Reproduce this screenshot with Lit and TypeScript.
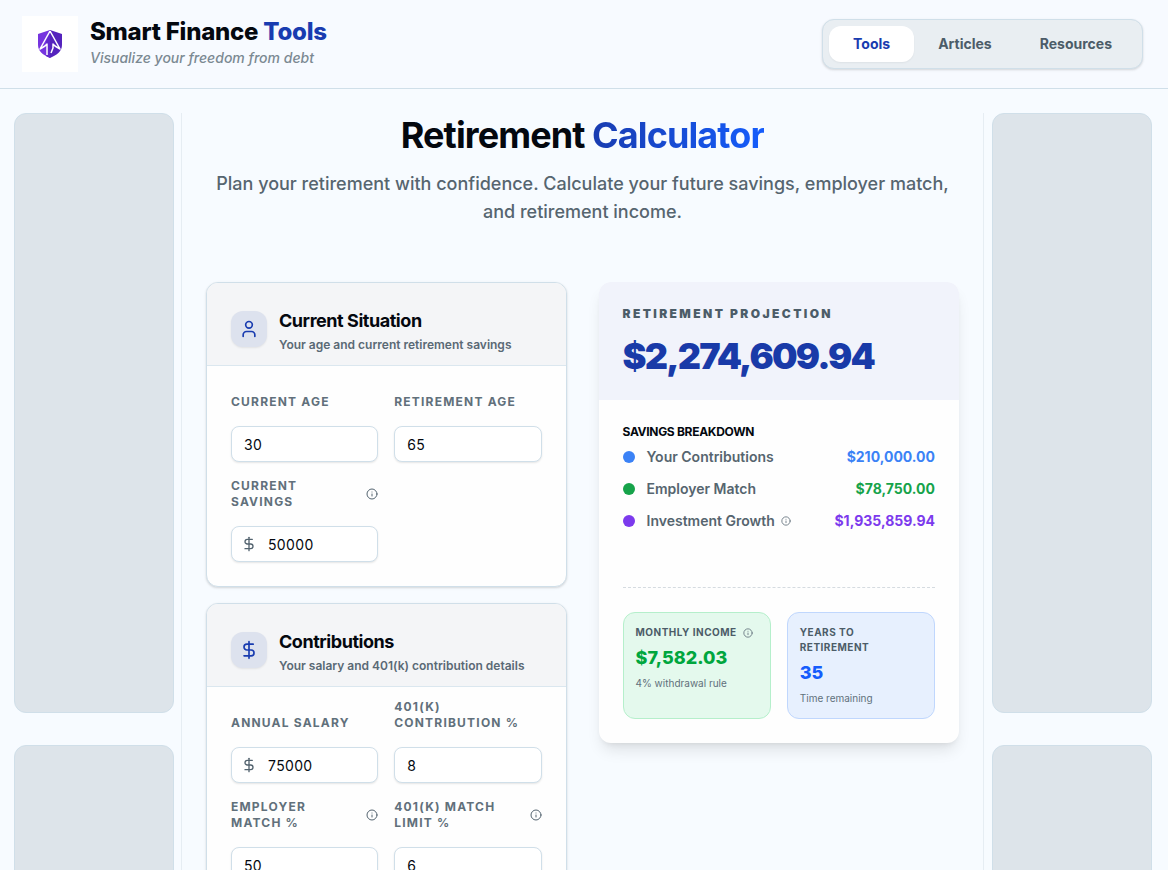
import { LitElement, html, css, svg, nothing } from "lit";
import { customElement, property } from "lit/decorators.js";

const infoIcon = (size: number) => html`<svg
  class="info"
  width=${size}
  height=${size}
  viewBox="0 0 24 24"
  fill="none"
  stroke="currentColor"
  stroke-width="2"
  stroke-linecap="round"
  stroke-linejoin="round"
  aria-hidden="true"
>
  <circle cx="12" cy="12" r="10"></circle>
  <path d="M12 16v-4M12 8h.01"></path>
</svg>`;

const dollarPaths = svg`<path d="M12 2v20"></path>
  <path d="M17 5H9.5a3.5 3.5 0 0 0 0 7h5a3.5 3.5 0 0 1 0 7H6"></path>`;
const personPaths = svg`<circle cx="12" cy="7" r="4"></circle>
  <path d="M19 21v-2a4 4 0 0 0-4-4H9a4 4 0 0 0-4 4v2"></path>`;

const lineIcon = (paths: unknown, size: number) => html`<svg
  width=${size}
  height=${size}
  viewBox="0 0 24 24"
  fill="none"
  stroke="currentColor"
  stroke-width="2"
  stroke-linecap="round"
  stroke-linejoin="round"
  aria-hidden="true"
>
  ${paths}
</svg>`;

interface Field {
  id: string;
  label: string;
  value: string;
  money?: boolean;
  info?: boolean;
}

const base = css`
  * {
    box-sizing: border-box;
    margin: 0;
  }
  svg {
    display: block;
    flex: none;
  }
`;

@customElement("field-card")
export class FieldCard extends LitElement {
  @property() heading = "";
  @property() note = "";
  @property() icon = "user";
  @property({ attribute: false }) fields: Field[] = [];

  static styles = [
    base,
    css`
      :host {
        display: block;
      }
      .card {
        border: 1px solid #d0dfe9;
        border-radius: 12px;
        background: #fefefe;
        overflow: hidden;
        box-shadow: 0 1px 3px rgba(0, 0, 0, 0.1), 0 1px 2px rgba(0, 0, 0, 0.06);
      }
      .head {
        display: flex;
        align-items: center;
        gap: 12px;
        padding: 24px 24px 12px;
        background: #f4f5f7;
        border-bottom: 1px solid #dbe7ef;
      }
      .badge {
        display: grid;
        place-items: center;
        width: 36px;
        height: 36px;
        margin-bottom: 2px;
        border-radius: 12px;
        background: #dde2ee;
        color: #193cb0;
        box-shadow: 0 1px 2px rgba(0, 0, 0, 0.08);
      }
      h2 {
        font-size: 18px;
        line-height: 28px;
        font-weight: 700;
        letter-spacing: -0.025em;
        color: #04080f;
      }
      .note {
        margin-top: 2px;
        font-size: 12px;
        line-height: 16px;
        font-weight: 600;
        color: #5a6975;
      }
      .body {
        display: grid;
        grid-template-columns: 1fr 1fr;
        gap: 16px;
        padding: 12px 24px 24px;
      }
      .field {
        display: grid;
        gap: 16px;
        min-width: 0;
      }
      .top {
        display: flex;
        align-items: flex-end;
        justify-content: space-between;
        gap: 8px;
        min-height: 32px;
      }
      .top.center {
        align-items: center;
      }
      label {
        font-size: 12px;
        line-height: 16px;
        font-weight: 700;
        letter-spacing: 0.1em;
        text-transform: uppercase;
        color: #61707b;
      }
      .info {
        color: #53636f;
      }
      .box {
        display: flex;
        align-items: center;
        gap: 11px;
        height: 36px;
        padding: 0 12px;
        border: 1px solid #d0dfe9;
        border-radius: 8px;
        background: #fff;
        color: #53636f;
        box-shadow: 0 1px 2px rgba(0, 0, 0, 0.1);
      }
      .box.money {
        padding-left: 9px;
      }
      input {
        flex: 1;
        width: 100%;
        min-width: 0;
        border: 0;
        padding: 2px 0 0;
        outline: 0;
        background: transparent;
        font: 400 14px/20px Inter, sans-serif;
        letter-spacing: 0.025em;
        color: #04080f;
      }
    `,
  ];

  render() {
    return html`<section class="card">
      <div class="head">
        <div class="badge">
          ${lineIcon(this.icon === "user" ? personPaths : dollarPaths, 20)}
        </div>
        <div>
          <h2>${this.heading}</h2>
          <p class="note">${this.note}</p>
        </div>
      </div>
      <div class="body">
        ${this.fields.map(
          (f) => html`<div class="field">
            <div class="top ${f.info ? "center" : ""}">
              <label for=${f.id}>${f.label}</label>
              ${f.info ? infoIcon(12) : nothing}
            </div>
            <div class="box ${f.money ? "money" : ""}">
              ${f.money ? lineIcon(dollarPaths, 16) : nothing}
              <input id=${f.id} type="text" inputmode="decimal" .value=${f.value} />
            </div>
          </div>`,
        )}
      </div>
    </section>`;
  }
}

@customElement("projection-card")
export class ProjectionCard extends LitElement {
  static styles = [
    base,
    css`
      :host {
        display: block;
      }
      .card {
        border-radius: 12px;
        overflow: hidden;
        background: #fefefe;
        box-shadow: 0 10px 15px -3px rgba(0, 0, 0, 0.1),
          0 4px 6px -4px rgba(0, 0, 0, 0.1);
      }
      .head {
        padding: 24px;
        background: #f1f3fb;
      }
      .eyebrow {
        font-size: 12px;
        line-height: 16px;
        font-weight: 900;
        letter-spacing: 0.2em;
        text-transform: uppercase;
        color: #4c5c68;
      }
      .total {
        margin-top: 14px;
        font-size: 36px;
        line-height: 40px;
        font-weight: 900;
        letter-spacing: -0.05em;
        color: #193aa8;
      }
      .body {
        padding: 24px;
      }
      h3 {
        font-size: 12px;
        line-height: 16px;
        font-weight: 700;
        letter-spacing: -0.025em;
        text-transform: uppercase;
        color: #04080f;
      }
      ul {
        display: grid;
        gap: 12px;
        margin-top: 7px;
        padding: 0;
        list-style: none;
      }
      li {
        display: flex;
        align-items: center;
        font-size: 14px;
        line-height: 20px;
      }
      .dot {
        width: 12px;
        height: 12px;
        margin-right: 12px;
        border-radius: 50%;
      }
      .name {
        font-weight: 600;
        color: #56656f;
      }
      .info {
        margin-left: 6px;
        color: #61707b;
      }
      .amount {
        margin-left: auto;
        font-weight: 700;
      }
      .dot.blue {
        background: #3b82f6;
      }
      .dot.green {
        background: #16a34a;
      }
      .dot.violet {
        background: #7c3aed;
      }
      .amount.blue {
        color: #3b82f6;
      }
      .amount.green {
        color: #16a34a;
      }
      .amount.violet {
        color: #7c3aed;
      }
      .stats {
        display: grid;
        grid-template-columns: 1fr 1fr;
        gap: 16px;
        margin-top: 56px;
        padding-top: 24px;
        border-top: 1px dashed #d5dbe0;
      }
      .stat {
        padding: 12px;
        border: 1px solid #c0d7fd;
        border-radius: 12px;
        background: #e7f0fe;
        font-size: 10px;
        line-height: 15px;
        color: #61707b;
      }
      .stat.green {
        border-color: #b5efcb;
        background: #e4f9ed;
      }
      .title {
        display: flex;
        align-items: center;
        font-weight: 700;
        letter-spacing: 0.05em;
        text-transform: uppercase;
        color: #4c5c68;
      }
      .value {
        margin: 4px 0;
        font-size: 18px;
        line-height: 28px;
        font-weight: 800;
        color: #155dfc;
      }
      .stat.green .value {
        color: #00a63e;
      }
    `,
  ];

  private row(color: string, name: string, amount: string, info = false) {
    return html`<li>
      <span class="dot ${color}"></span><span class="name">${name}</span>
      ${info ? infoIcon(10) : nothing}
      <span class="amount ${color}">${amount}</span>
    </li>`;
  }

  render() {
    return html`<section class="card">
      <div class="head">
        <p class="eyebrow">Retirement Projection</p>
        <p class="total">$2,274,609.94</p>
      </div>
      <div class="body">
        <h3>Savings Breakdown</h3>
        <ul>
          ${this.row("blue", "Your Contributions", "$210,000.00")}
          ${this.row("green", "Employer Match", "$78,750.00")}
          ${this.row("violet", "Investment Growth", "$1,935,859.94", true)}
        </ul>
        <div class="stats">
          <div class="stat green">
            <p class="title">Monthly Income ${infoIcon(10)}</p>
            <p class="value">$7,582.03</p>
            <p>4% withdrawal rule</p>
          </div>
          <div class="stat">
            <p class="title">Years to Retirement</p>
            <p class="value">35</p>
            <p>Time remaining</p>
          </div>
        </div>
      </div>
    </section>`;
  }
}

@customElement("app-root")
export class AppRoot extends LitElement {
  static styles = [
    base,
    css`
      :host {
        display: block;
        height: 100vh;
        overflow: hidden;
        background: #f7fbff;
        font-family: Inter, sans-serif;
        color: #04080f;
      }
      header {
        display: flex;
        align-items: center;
        justify-content: space-between;
        padding: 16px 25px 16px 22px;
        background: #f7faff;
        border-bottom: 1px solid #d0dfe9;
      }
      .brand {
        display: flex;
        align-items: flex-start;
        gap: 12px;
        color: inherit;
        text-decoration: none;
      }
      .logo {
        display: grid;
        place-items: center;
        width: 56px;
        height: 56px;
        background: #fff;
      }
      .title {
        font-size: 24px;
        line-height: 32px;
        font-weight: 800;
        letter-spacing: -0.01em;
      }
      .title span {
        color: #193cb0;
      }
      .tag {
        font-size: 14px;
        line-height: 20px;
        font-weight: 500;
        font-style: italic;
        color: #7b8992;
      }
      nav {
        display: flex;
        padding: 6px;
        border: 1px solid #d0dfe9;
        border-radius: 12px;
        background: #e9eef2;
        box-shadow: 0 1px 3px rgba(0, 0, 0, 0.1), 0 1px 2px rgba(0, 0, 0, 0.06);
      }
      nav a {
        padding: 8px 24px;
        border-radius: 12px;
        font-size: 14px;
        line-height: 20px;
        font-weight: 700;
        color: #4c5c68;
        text-decoration: none;
      }
      nav a.on {
        background: #fff;
        color: #193cb0;
        box-shadow: 0 1px 2px rgba(0, 0, 0, 0.05);
      }
      .page {
        display: grid;
        grid-template-columns: 160px minmax(0, 1fr) 160px;
        gap: 7px;
        padding: 24px 16px 0 14px;
      }
      aside {
        display: grid;
        gap: 32px;
        align-content: start;
      }
      .slot {
        height: 600px;
        border: 1px solid #d0dfe9;
        border-radius: 12px;
        background: #dde4ea;
      }
      main {
        margin-right: 1px;
        padding: 0 24px 24px;
        border: solid #e6edf3;
        border-width: 0 1px;
      }
      h1 {
        font-size: 36px;
        line-height: 45px;
        font-weight: 700;
        letter-spacing: -0.025em;
        text-align: center;
      }
      h1 span {
        background: linear-gradient(90deg, #193cb0, #155dfc);
        -webkit-background-clip: text;
        background-clip: text;
        color: transparent;
      }
      .lead {
        margin: 12px auto 56px;
        font-size: 18px;
        line-height: 28px;
        font-weight: 500;
        text-align: center;
        color: #56656f;
      }
      .cols {
        display: grid;
        grid-template-columns: 1fr 1fr;
        gap: 32px;
        align-items: start;
      }
      .stack {
        display: grid;
        gap: 16px;
      }
    `,
  ];

  private situation: Field[] = [
    { id: "current-age", label: "Current Age", value: "30" },
    { id: "retirement-age", label: "Retirement Age", value: "65" },
    { id: "current-savings", label: "Current Savings", value: "50000", money: true, info: true },
  ];

  private contributions: Field[] = [
    { id: "salary", label: "Annual Salary", value: "75000", money: true },
    { id: "contribution", label: "401(k) Contribution %", value: "8" },
    { id: "employer-match", label: "Employer Match %", value: "50", info: true },
    { id: "match-limit", label: "401(k) Match Limit %", value: "6", info: true },
  ];

  render() {
    return html`
      <header>
        <a class="brand" href="#">
          <span class="logo">
            <svg width="26" height="30" viewBox="0 0 26 30" aria-hidden="true">
              <path d="M13 1 25 5v11c0 6-5 10-12 13z" fill="#5423bd"></path>
              <path d="M13 1 1 5v11c0 6 5 10 12 13z" fill="#7634df"></path>
              <path d="M13 4v25c-2-1-4-2-4-2V12z" fill="#6128cc"></path>
              <path
                d="M13 2 3 20l5-3 2-2v11M13 2l10 18-5-3-2-2v4l-2 5"
                fill="none"
                stroke="#fff"
                stroke-width="1.5"
                stroke-linejoin="round"
              ></path>
            </svg>
          </span>
          <span>
            <div class="title">Smart Finance <span>Tools</span></div>
            <div class="tag">Visualize your freedom from debt</div>
          </span>
        </a>
        <nav>
          <a class="on" href="#tools">Tools</a>
          <a href="#articles">Articles</a>
          <a href="#resources">Resources</a>
        </nav>
      </header>
      <div class="page">
        <aside>
          <div class="slot"></div>
          <div class="slot"></div>
        </aside>
        <main>
          <h1>Retirement <span>Calculator</span></h1>
          <p class="lead">
            Plan your retirement with confidence. Calculate your future savings,
            employer match, and retirement income.
          </p>
          <div class="cols">
            <div class="stack">
              <field-card
                icon="user"
                heading="Current Situation"
                note="Your age and current retirement savings"
                .fields=${this.situation}
              ></field-card>
              <field-card
                icon="dollar"
                heading="Contributions"
                note="Your salary and 401(k) contribution details"
                .fields=${this.contributions}
              ></field-card>
            </div>
            <projection-card></projection-card>
          </div>
        </main>
        <aside>
          <div class="slot"></div>
          <div class="slot"></div>
        </aside>
      </div>
    `;
  }
}
